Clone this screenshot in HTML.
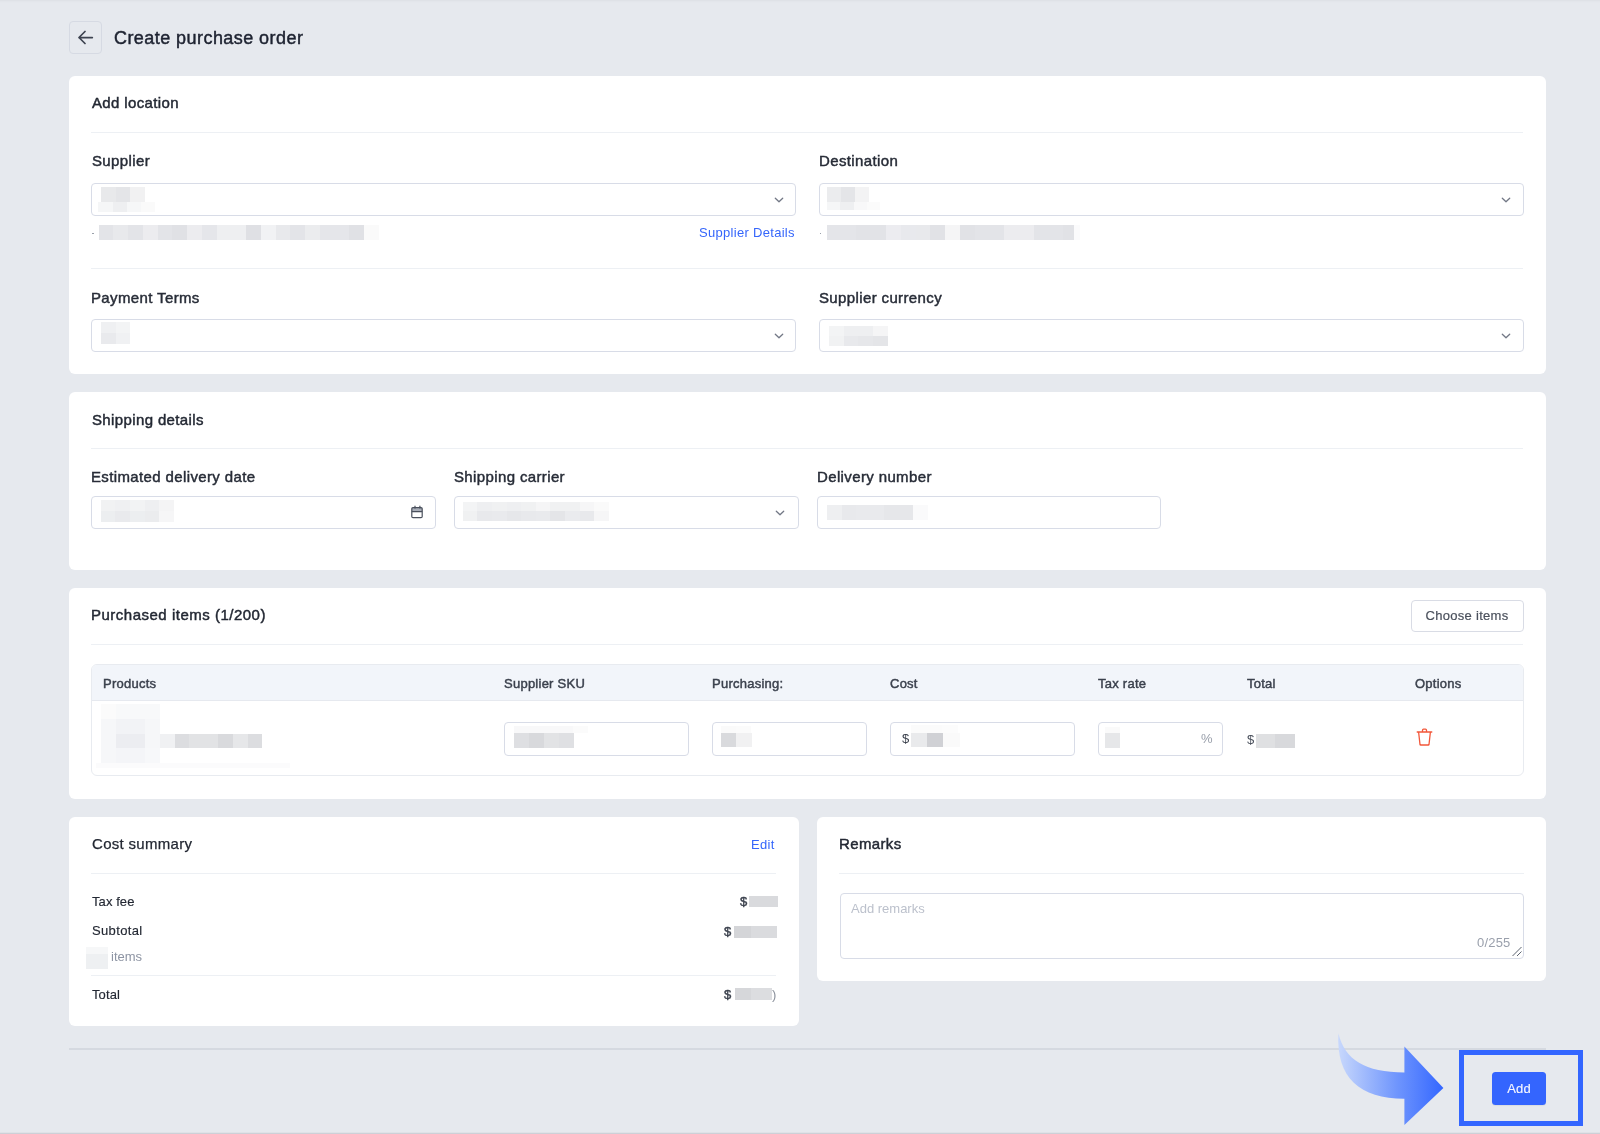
<!DOCTYPE html><html><head><meta charset="utf-8"><style>
html,body{margin:0;padding:0;width:1600px;height:1134px;overflow:hidden;background:#e6e9ee;}
body{position:relative;font-family:"Liberation Sans",sans-serif;}
.t{position:absolute;white-space:nowrap;line-height:1;will-change:transform;}
.m{-webkit-text-stroke:0.45px currentColor;letter-spacing:0.25px;}
.l{letter-spacing:0.37px;}
.r{position:absolute;box-sizing:border-box;}
</style></head><body>
<div class="r" style="left:0px;top:0px;width:1600px;height:1px;background:#dfe2e7"></div>
<div class="r" style="left:0px;top:1px;width:1600px;height:1px;background:#e3e6eb"></div>
<div class="r" style="left:0px;top:2px;width:1600px;height:1px;background:#e5e8ed"></div>
<div class="r" style="left:0px;top:1132px;width:1600px;height:1px;background:#dfe2e7"></div>
<div class="r" style="left:0px;top:1133px;width:1600px;height:1px;background:#cdd0d7"></div>
<div class="r" style="left:69px;top:21px;width:33px;height:33px;background:transparent;border:1px solid #d6dae3;border-radius:4px;"></div>
<svg class="r" style="left:77px;top:29px" width="18" height="17" viewBox="0 0 18 17"><path d="M15.3 8.5 H2 M8 2.5 L2 8.5 L8 14.5" fill="none" stroke="#3d4350" stroke-width="1.75" stroke-linecap="round" stroke-linejoin="round"/></svg>
<div class="t m" style="left:113.50px;top:29.06px;font-size:18px;color:#1d2230;letter-spacing:0.44px;">Create purchase order</div>
<div class="r" style="left:69px;top:76px;width:1477px;height:298px;background:#ffffff;border-radius:6px;"></div>
<div class="t m" style="left:91.50px;top:95.30px;font-size:15px;color:#232833;letter-spacing:0.37px;">Add location</div>
<div class="r" style="left:91px;top:132px;width:1432px;height:1px;background:#edf0f4"></div>
<div class="t m" style="left:91.50px;top:153.30px;font-size:15px;color:#272c37;letter-spacing:0.37px;">Supplier</div>
<div class="t m" style="left:819.30px;top:153.30px;font-size:15px;color:#272c37;letter-spacing:0.37px;">Destination</div>
<div class="r" style="left:91px;top:183px;width:705px;height:33px;background:#fff;border:1px solid #d8dce7;border-radius:4px;"></div>
<div class="r" style="left:819px;top:183px;width:705px;height:33px;background:#fff;border:1px solid #d8dce7;border-radius:4px;"></div>
<svg class="r" style="left:774px;top:196px" width="10" height="8" viewBox="0 0 10 8"><path d="M1.3 2.3 L5 5.8 L8.7 2.3" fill="none" stroke="#737886" stroke-width="1.3" stroke-linecap="round" stroke-linejoin="round"/></svg>
<svg class="r" style="left:1501.2px;top:196px" width="10" height="8" viewBox="0 0 10 8"><path d="M1.3 2.3 L5 5.8 L8.7 2.3" fill="none" stroke="#737886" stroke-width="1.3" stroke-linecap="round" stroke-linejoin="round"/></svg>
<div class="r" style="left:101.00px;top:187.00px;width:14.90px;height:14.80px;background:#e8e9eb"></div>
<div class="r" style="left:115.60px;top:187.00px;width:14.90px;height:14.80px;background:#e4e5e8"></div>
<div class="r" style="left:130.20px;top:187.00px;width:14.90px;height:14.80px;background:#f1f1f2"></div>
<div class="r" style="left:98.40px;top:201.60px;width:14.40px;height:10.30px;background:#f5f6f7"></div>
<div class="r" style="left:112.50px;top:201.60px;width:14.40px;height:10.30px;background:#eeeff1"></div>
<div class="r" style="left:126.60px;top:201.60px;width:14.40px;height:10.30px;background:#f6f7f8"></div>
<div class="r" style="left:140.70px;top:201.60px;width:14.40px;height:10.30px;background:#fafafa"></div>
<div class="r" style="left:827.30px;top:187.00px;width:14.10px;height:14.90px;background:#ebecee"></div>
<div class="r" style="left:841.10px;top:187.00px;width:14.10px;height:14.90px;background:#e4e5e8"></div>
<div class="r" style="left:854.90px;top:187.00px;width:14.10px;height:14.90px;background:#f3f3f4"></div>
<div class="r" style="left:827.30px;top:201.60px;width:13.40px;height:8.80px;background:#f5f6f7"></div>
<div class="r" style="left:840.40px;top:201.60px;width:13.40px;height:8.80px;background:#eeeff1"></div>
<div class="r" style="left:853.50px;top:201.60px;width:13.40px;height:8.80px;background:#f8f8f9"></div>
<div class="r" style="left:866.60px;top:201.60px;width:13.40px;height:8.80px;background:#fbfbfb"></div>
<div class="r" style="left:92px;top:232.5px;width:1.5px;height:1.5px;background:#9aa0aa"></div>
<div class="r" style="left:98.50px;top:225.30px;width:15.05px;height:14.80px;background:#e3e4e8"></div>
<div class="r" style="left:113.25px;top:225.30px;width:15.05px;height:14.80px;background:#e8e9ec"></div>
<div class="r" style="left:128.00px;top:225.30px;width:15.05px;height:14.80px;background:#e3e4e8"></div>
<div class="r" style="left:142.75px;top:225.30px;width:15.05px;height:14.80px;background:#ececef"></div>
<div class="r" style="left:157.50px;top:225.30px;width:15.05px;height:14.80px;background:#e3e4e8"></div>
<div class="r" style="left:172.25px;top:225.30px;width:15.05px;height:14.80px;background:#e0e1e5"></div>
<div class="r" style="left:187.00px;top:225.30px;width:15.05px;height:14.80px;background:#ececef"></div>
<div class="r" style="left:201.75px;top:225.30px;width:15.05px;height:14.80px;background:#e5e6ea"></div>
<div class="r" style="left:216.50px;top:225.30px;width:15.05px;height:14.80px;background:#eeeff1"></div>
<div class="r" style="left:231.25px;top:225.30px;width:15.05px;height:14.80px;background:#eeeff1"></div>
<div class="r" style="left:246.00px;top:225.30px;width:15.05px;height:14.80px;background:#dfe0e4"></div>
<div class="r" style="left:260.75px;top:225.30px;width:15.05px;height:14.80px;background:#f1f2f4"></div>
<div class="r" style="left:275.50px;top:225.30px;width:15.05px;height:14.80px;background:#e8e9ec"></div>
<div class="r" style="left:290.25px;top:225.30px;width:15.05px;height:14.80px;background:#e3e4e8"></div>
<div class="r" style="left:305.00px;top:225.30px;width:15.05px;height:14.80px;background:#ebecee"></div>
<div class="r" style="left:319.75px;top:225.30px;width:15.05px;height:14.80px;background:#e5e6ea"></div>
<div class="r" style="left:334.50px;top:225.30px;width:15.05px;height:14.80px;background:#e5e6ea"></div>
<div class="r" style="left:349.25px;top:225.30px;width:15.05px;height:14.80px;background:#e0e1e5"></div>
<div class="r" style="left:364.00px;top:225.30px;width:15.05px;height:14.80px;background:#fafafa"></div>
<div class="t " style="right:805.00px;top:226.30px;font-size:13px;color:#3566fb;letter-spacing:0.3px;">Supplier Details</div>
<div class="r" style="left:819.5px;top:232.5px;width:1.5px;height:1.5px;background:#9aa0aa"></div>
<div class="r" style="left:826.90px;top:225.30px;width:15.07px;height:14.80px;background:#e4e5e9"></div>
<div class="r" style="left:841.67px;top:225.30px;width:15.07px;height:14.80px;background:#e4e5e9"></div>
<div class="r" style="left:856.44px;top:225.30px;width:15.07px;height:14.80px;background:#e2e3e7"></div>
<div class="r" style="left:871.21px;top:225.30px;width:15.07px;height:14.80px;background:#e2e3e7"></div>
<div class="r" style="left:885.98px;top:225.30px;width:15.07px;height:14.80px;background:#ececf0"></div>
<div class="r" style="left:900.75px;top:225.30px;width:15.07px;height:14.80px;background:#e8e9ed"></div>
<div class="r" style="left:915.52px;top:225.30px;width:15.07px;height:14.80px;background:#e8e9ec"></div>
<div class="r" style="left:930.29px;top:225.30px;width:15.07px;height:14.80px;background:#e1e2e6"></div>
<div class="r" style="left:945.06px;top:225.30px;width:15.07px;height:14.80px;background:#f5f5f6"></div>
<div class="r" style="left:959.83px;top:225.30px;width:15.07px;height:14.80px;background:#e1e2e6"></div>
<div class="r" style="left:974.60px;top:225.30px;width:15.07px;height:14.80px;background:#e3e4e8"></div>
<div class="r" style="left:989.37px;top:225.30px;width:15.07px;height:14.80px;background:#e3e4e8"></div>
<div class="r" style="left:1004.14px;top:225.30px;width:15.07px;height:14.80px;background:#ececef"></div>
<div class="r" style="left:1018.91px;top:225.30px;width:15.07px;height:14.80px;background:#ececef"></div>
<div class="r" style="left:1033.68px;top:225.30px;width:15.07px;height:14.80px;background:#e3e4e8"></div>
<div class="r" style="left:1048.45px;top:225.30px;width:15.07px;height:14.80px;background:#e3e4e8"></div>
<div class="r" style="left:1063.22px;top:225.30px;width:15.07px;height:14.80px;background:#e1e2e6"></div>
<div class="r" style="left:1073.5px;top:225.3px;width:6px;height:14.5px;background:#fbfbfc"></div>
<div class="r" style="left:91px;top:268px;width:1432px;height:1px;background:#edf0f4"></div>
<div class="t m" style="left:90.50px;top:289.60px;font-size:15px;color:#272c37;letter-spacing:0.37px;">Payment Terms</div>
<div class="t m" style="left:819.30px;top:289.60px;font-size:15px;color:#272c37;letter-spacing:0.37px;">Supplier currency</div>
<div class="r" style="left:91px;top:319px;width:705px;height:33px;background:#fff;border:1px solid #d8dce7;border-radius:4px;"></div>
<div class="r" style="left:819px;top:319px;width:705px;height:33px;background:#fff;border:1px solid #d8dce7;border-radius:4px;"></div>
<svg class="r" style="left:774.2px;top:331.8px" width="10" height="8" viewBox="0 0 10 8"><path d="M1.3 2.3 L5 5.8 L8.7 2.3" fill="none" stroke="#737886" stroke-width="1.3" stroke-linecap="round" stroke-linejoin="round"/></svg>
<svg class="r" style="left:1501.2px;top:331.8px" width="10" height="8" viewBox="0 0 10 8"><path d="M1.3 2.3 L5 5.8 L8.7 2.3" fill="none" stroke="#737886" stroke-width="1.3" stroke-linecap="round" stroke-linejoin="round"/></svg>
<div class="r" style="left:101.00px;top:322.00px;width:14.90px;height:11.30px;background:#eff0f2"></div>
<div class="r" style="left:115.60px;top:322.00px;width:14.90px;height:11.30px;background:#f3f4f5"></div>
<div class="r" style="left:101.00px;top:333.00px;width:14.90px;height:11.30px;background:#e9eaed"></div>
<div class="r" style="left:115.60px;top:333.00px;width:14.90px;height:11.30px;background:#f0f1f3"></div>
<div class="r" style="left:829.00px;top:326.00px;width:14.90px;height:10.30px;background:#f3f4f5"></div>
<div class="r" style="left:843.60px;top:326.00px;width:14.90px;height:10.30px;background:#eeeff1"></div>
<div class="r" style="left:858.20px;top:326.00px;width:14.90px;height:10.30px;background:#eeeff1"></div>
<div class="r" style="left:872.80px;top:326.00px;width:14.90px;height:10.30px;background:#f5f5f6"></div>
<div class="r" style="left:829.00px;top:336.00px;width:14.90px;height:10.30px;background:#f1f2f3"></div>
<div class="r" style="left:843.60px;top:336.00px;width:14.90px;height:10.30px;background:#e8e9ec"></div>
<div class="r" style="left:858.20px;top:336.00px;width:14.90px;height:10.30px;background:#e6e7ea"></div>
<div class="r" style="left:872.80px;top:336.00px;width:14.90px;height:10.30px;background:#e4e5e8"></div>
<div class="r" style="left:69px;top:392px;width:1477px;height:178px;background:#ffffff;border-radius:6px;"></div>
<div class="t m" style="left:91.50px;top:411.50px;font-size:15px;color:#232833;letter-spacing:0.37px;">Shipping details</div>
<div class="r" style="left:91px;top:448px;width:1432px;height:1px;background:#edf0f4"></div>
<div class="t m" style="left:90.50px;top:468.50px;font-size:15px;color:#272c37;letter-spacing:0.37px;">Estimated delivery date</div>
<div class="t m" style="left:454.30px;top:468.50px;font-size:15px;color:#272c37;letter-spacing:0.37px;">Shipping carrier</div>
<div class="t m" style="left:816.70px;top:468.50px;font-size:15px;color:#272c37;letter-spacing:0.37px;">Delivery number</div>
<div class="r" style="left:91px;top:496px;width:345px;height:33px;background:#fff;border:1px solid #d8dce7;border-radius:4px;"></div>
<div class="r" style="left:454px;top:496px;width:345px;height:33px;background:#fff;border:1px solid #d8dce7;border-radius:4px;"></div>
<div class="r" style="left:817px;top:496px;width:344px;height:33px;background:#fff;border:1px solid #d8dce7;border-radius:4px;"></div>
<svg class="r" style="left:410px;top:505px" width="14" height="14" viewBox="0 0 14 14"><rect x="1.8" y="2.6" width="10.4" height="4" fill="#a9aeb8"/><rect x="1.8" y="2.6" width="10.4" height="10" rx="1.2" fill="none" stroke="#4a505c" stroke-width="1.2"/><path d="M1.8 6.6 H12.2 M5 0.8 V3.4 M9.9 0.8 V3.4" stroke="#4a505c" stroke-width="1.2" fill="none"/></svg>
<svg class="r" style="left:775px;top:509px" width="10" height="8" viewBox="0 0 10 8"><path d="M1.3 2.3 L5 5.8 L8.7 2.3" fill="none" stroke="#737886" stroke-width="1.3" stroke-linecap="round" stroke-linejoin="round"/></svg>
<div class="r" style="left:100.70px;top:499.60px;width:14.90px;height:11.30px;background:#f1f2f3"></div>
<div class="r" style="left:115.30px;top:499.60px;width:14.90px;height:11.30px;background:#eff0f2"></div>
<div class="r" style="left:129.90px;top:499.60px;width:14.90px;height:11.30px;background:#f2f3f4"></div>
<div class="r" style="left:144.50px;top:499.60px;width:14.90px;height:11.30px;background:#eeeff1"></div>
<div class="r" style="left:159.10px;top:499.60px;width:14.90px;height:11.30px;background:#f4f4f5"></div>
<div class="r" style="left:100.70px;top:510.60px;width:14.90px;height:11.30px;background:#eceef0"></div>
<div class="r" style="left:115.30px;top:510.60px;width:14.90px;height:11.30px;background:#e9eaed"></div>
<div class="r" style="left:129.90px;top:510.60px;width:14.90px;height:11.30px;background:#eceef0"></div>
<div class="r" style="left:144.50px;top:510.60px;width:14.90px;height:11.30px;background:#ebecee"></div>
<div class="r" style="left:159.10px;top:510.60px;width:14.90px;height:11.30px;background:#f6f6f7"></div>
<div class="r" style="left:462.80px;top:501.80px;width:14.90px;height:9.30px;background:#f3f4f5"></div>
<div class="r" style="left:477.40px;top:501.80px;width:14.90px;height:9.30px;background:#eeeff1"></div>
<div class="r" style="left:492.00px;top:501.80px;width:14.90px;height:9.30px;background:#f0f1f2"></div>
<div class="r" style="left:506.60px;top:501.80px;width:14.90px;height:9.30px;background:#eeeff1"></div>
<div class="r" style="left:521.20px;top:501.80px;width:14.90px;height:9.30px;background:#f0f1f2"></div>
<div class="r" style="left:535.80px;top:501.80px;width:14.90px;height:9.30px;background:#f5f5f6"></div>
<div class="r" style="left:550.40px;top:501.80px;width:14.90px;height:9.30px;background:#f0f1f2"></div>
<div class="r" style="left:565.00px;top:501.80px;width:14.90px;height:9.30px;background:#f0f1f2"></div>
<div class="r" style="left:579.60px;top:501.80px;width:14.90px;height:9.30px;background:#f6f6f7"></div>
<div class="r" style="left:594.20px;top:501.80px;width:14.90px;height:9.30px;background:#fafafa"></div>
<div class="r" style="left:462.80px;top:510.80px;width:14.90px;height:9.80px;background:#f0f1f2"></div>
<div class="r" style="left:477.40px;top:510.80px;width:14.90px;height:9.80px;background:#e8e9ec"></div>
<div class="r" style="left:492.00px;top:510.80px;width:14.90px;height:9.80px;background:#e9eaed"></div>
<div class="r" style="left:506.60px;top:510.80px;width:14.90px;height:9.80px;background:#e6e7ea"></div>
<div class="r" style="left:521.20px;top:510.80px;width:14.90px;height:9.80px;background:#e8e9ec"></div>
<div class="r" style="left:535.80px;top:510.80px;width:14.90px;height:9.80px;background:#e9eaed"></div>
<div class="r" style="left:550.40px;top:510.80px;width:14.90px;height:9.80px;background:#e4e5e8"></div>
<div class="r" style="left:565.00px;top:510.80px;width:14.90px;height:9.80px;background:#eaebee"></div>
<div class="r" style="left:579.60px;top:510.80px;width:14.90px;height:9.80px;background:#e8e9ec"></div>
<div class="r" style="left:594.20px;top:510.80px;width:14.90px;height:9.80px;background:#f6f6f7"></div>
<div class="r" style="left:827.20px;top:505.00px;width:14.60px;height:14.70px;background:#eeeff1"></div>
<div class="r" style="left:841.50px;top:505.00px;width:14.60px;height:14.70px;background:#e8e9ec"></div>
<div class="r" style="left:855.80px;top:505.00px;width:14.60px;height:14.70px;background:#e9eaed"></div>
<div class="r" style="left:870.10px;top:505.00px;width:14.60px;height:14.70px;background:#e9eaed"></div>
<div class="r" style="left:884.40px;top:505.00px;width:14.60px;height:14.70px;background:#e6e7ea"></div>
<div class="r" style="left:898.70px;top:505.00px;width:14.60px;height:14.70px;background:#e6e7ea"></div>
<div class="r" style="left:913.00px;top:505.00px;width:14.60px;height:14.70px;background:#fafafb"></div>
<div class="r" style="left:69px;top:588px;width:1477px;height:211px;background:#ffffff;border-radius:6px;"></div>
<div class="t m" style="left:90.50px;top:606.80px;font-size:15px;color:#232833;letter-spacing:0.5px;">Purchased items (1/200)</div>
<div class="r" style="left:1411px;top:600px;width:113px;height:32px;background:#fff;border:1px solid #d9dce5;border-radius:4px;"></div>
<div class="t " style="left:1267.30px;width:400px;text-align:center;top:609.10px;font-size:13px;color:#4a505c;letter-spacing:0.3px;-webkit-text-stroke:0.2px #4a505c;">Choose items</div>
<div class="r" style="left:91px;top:644px;width:1432px;height:1px;background:#edf0f4"></div>
<div class="r" style="left:91px;top:663.5px;width:1432.5px;height:112px;background:#fff;border:1px solid #e8ebf0;border-radius:6px;"></div>
<div class="r" style="left:92px;top:664.5px;width:1430.5px;height:36px;background:#f2f5fa;border-radius:5px 5px 0 0;border-bottom:1px solid #e6e9ef"></div>
<div class="t m" style="left:102.80px;top:677.20px;font-size:13px;color:#3b414d;">Products</div>
<div class="t m" style="left:504.00px;top:677.20px;font-size:13px;color:#3b414d;">Supplier SKU</div>
<div class="t m" style="left:712.00px;top:677.20px;font-size:13px;color:#3b414d;">Purchasing:</div>
<div class="t m" style="left:890.00px;top:677.20px;font-size:13px;color:#3b414d;">Cost</div>
<div class="t m" style="left:1098.00px;top:677.20px;font-size:13px;color:#3b414d;">Tax rate</div>
<div class="t m" style="left:1246.50px;top:677.20px;font-size:13px;color:#3b414d;">Total</div>
<div class="t m" style="left:1415.00px;top:677.20px;font-size:13px;color:#3b414d;">Options</div>
<div class="r" style="left:101.00px;top:704.00px;width:14.90px;height:15.30px;background:#fbfbfb"></div>
<div class="r" style="left:115.60px;top:704.00px;width:14.90px;height:15.30px;background:#f8f9fa"></div>
<div class="r" style="left:130.20px;top:704.00px;width:14.90px;height:15.30px;background:#f8f9fa"></div>
<div class="r" style="left:144.80px;top:704.00px;width:14.90px;height:15.30px;background:#f8f9fa"></div>
<div class="r" style="left:101.00px;top:719.00px;width:14.90px;height:14.80px;background:#f6f7f9"></div>
<div class="r" style="left:115.60px;top:719.00px;width:14.90px;height:14.80px;background:#f2f3f6"></div>
<div class="r" style="left:130.20px;top:719.00px;width:14.90px;height:14.80px;background:#f2f3f6"></div>
<div class="r" style="left:144.80px;top:719.00px;width:14.90px;height:14.80px;background:#f6f7f9"></div>
<div class="r" style="left:101.00px;top:733.50px;width:14.90px;height:14.80px;background:#f6f7f9"></div>
<div class="r" style="left:115.60px;top:733.50px;width:14.90px;height:14.80px;background:#ecedf1"></div>
<div class="r" style="left:130.20px;top:733.50px;width:14.90px;height:14.80px;background:#ecedf1"></div>
<div class="r" style="left:144.80px;top:733.50px;width:14.90px;height:14.80px;background:#f6f7f9"></div>
<div class="r" style="left:101.00px;top:748.00px;width:14.90px;height:14.80px;background:#f6f7f9"></div>
<div class="r" style="left:115.60px;top:748.00px;width:14.90px;height:14.80px;background:#f4f5f8"></div>
<div class="r" style="left:130.20px;top:748.00px;width:14.90px;height:14.80px;background:#f4f5f8"></div>
<div class="r" style="left:144.80px;top:748.00px;width:14.90px;height:14.80px;background:#f7f8fa"></div>
<div class="r" style="left:160.00px;top:733.50px;width:14.90px;height:14.80px;background:#f0f1f3"></div>
<div class="r" style="left:174.60px;top:733.50px;width:14.90px;height:14.80px;background:#dcdde0"></div>
<div class="r" style="left:189.20px;top:733.50px;width:14.90px;height:14.80px;background:#e2e3e5"></div>
<div class="r" style="left:203.80px;top:733.50px;width:14.90px;height:14.80px;background:#e2e3e5"></div>
<div class="r" style="left:218.40px;top:733.50px;width:14.90px;height:14.80px;background:#d9dadd"></div>
<div class="r" style="left:233.00px;top:733.50px;width:14.90px;height:14.80px;background:#e6e7e9"></div>
<div class="r" style="left:247.60px;top:733.50px;width:14.90px;height:14.80px;background:#dcdde0"></div>
<div class="r" style="left:96px;top:762.5px;width:193.5px;height:5.5px;background:#fbfbfc"></div>
<div class="r" style="left:504px;top:722px;width:185px;height:34px;background:#fff;border:1px solid #d8dce7;border-radius:4px;"></div>
<div class="r" style="left:712px;top:722px;width:155px;height:34px;background:#fff;border:1px solid #d8dce7;border-radius:4px;"></div>
<div class="r" style="left:890px;top:722px;width:185px;height:34px;background:#fff;border:1px solid #d8dce7;border-radius:4px;"></div>
<div class="r" style="left:1098px;top:722px;width:125px;height:34px;background:#fff;border:1px solid #d8dce7;border-radius:4px;"></div>
<div class="r" style="left:514.40px;top:725.50px;width:15.00px;height:7.80px;background:#f8f8f9"></div>
<div class="r" style="left:529.10px;top:725.50px;width:15.00px;height:7.80px;background:#f8f8f9"></div>
<div class="r" style="left:543.80px;top:725.50px;width:15.00px;height:7.80px;background:#f8f8f9"></div>
<div class="r" style="left:558.50px;top:725.50px;width:15.00px;height:7.80px;background:#f8f8f9"></div>
<div class="r" style="left:573.20px;top:725.50px;width:15.00px;height:7.80px;background:#fbfbfb"></div>
<div class="r" style="left:514.40px;top:733.00px;width:15.00px;height:15.00px;background:#dedfe2"></div>
<div class="r" style="left:529.10px;top:733.00px;width:15.00px;height:15.00px;background:#d8d9dc"></div>
<div class="r" style="left:543.80px;top:733.00px;width:15.00px;height:15.00px;background:#e2e3e5"></div>
<div class="r" style="left:558.50px;top:733.00px;width:15.00px;height:15.00px;background:#dfe0e3"></div>
<div class="r" style="left:721.00px;top:725.50px;width:15.00px;height:7.80px;background:#fafafa"></div>
<div class="r" style="left:735.70px;top:725.50px;width:15.00px;height:7.80px;background:#fbfbfb"></div>
<div class="r" style="left:720.70px;top:733.00px;width:16.00px;height:13.80px;background:#d9dadd"></div>
<div class="r" style="left:736.40px;top:733.00px;width:16.00px;height:13.80px;background:#f1f1f2"></div>
<div class="t " style="left:901.80px;top:732.30px;font-size:13px;color:#3b414d;">$</div>
<div class="r" style="left:911.00px;top:725.00px;width:15.80px;height:8.30px;background:#fbfbfb"></div>
<div class="r" style="left:926.50px;top:725.00px;width:15.80px;height:8.30px;background:#fbfbfb"></div>
<div class="r" style="left:942.00px;top:725.00px;width:15.80px;height:8.30px;background:#fcfcfc"></div>
<div class="r" style="left:911.00px;top:733.30px;width:16.50px;height:13.80px;background:#e9eaec"></div>
<div class="r" style="left:927.20px;top:733.30px;width:16.50px;height:13.80px;background:#d0d1d5"></div>
<div class="r" style="left:943.40px;top:733.30px;width:16.50px;height:13.80px;background:#fafafa"></div>
<div class="r" style="left:1105.00px;top:726.50px;width:15.30px;height:6.80px;background:#fafafa"></div>
<div class="r" style="left:1105.00px;top:733.00px;width:15.30px;height:15.00px;background:#e6e7e9"></div>
<div class="t " style="left:1200.50px;top:732.10px;font-size:13px;color:#9aa0ab;">%</div>
<div class="t " style="left:1246.50px;top:732.80px;font-size:13px;color:#4a505c;">$</div>
<div class="r" style="left:1255.50px;top:733.50px;width:20.00px;height:14.80px;background:#dfe0e2"></div>
<div class="r" style="left:1275.20px;top:733.50px;width:20.00px;height:14.80px;background:#d8d9dc"></div>
<svg class="r" style="left:1415px;top:727px" width="19" height="20" viewBox="0 0 19 20"><path d="M2.2 5 H16.8 M7.5 4.8 V3.2 Q7.5 2.2 8.5 2.2 H10.5 Q11.5 2.2 11.5 3.2 V4.8 M3.6 5 L5 17.5 Q5.1 18 5.7 18 H13.3 Q13.9 18 14 17.5 L15.4 5" fill="none" stroke="#f2573a" stroke-width="1.3" stroke-linejoin="round" stroke-linecap="round"/></svg>
<div class="r" style="left:69px;top:817px;width:730px;height:209px;background:#ffffff;border-radius:6px;"></div>
<div class="t " style="left:91.50px;top:836.00px;font-size:15px;color:#232833;letter-spacing:0.3px;-webkit-text-stroke:0.25px #232833;">Cost summary</div>
<div class="t " style="right:825.70px;top:838.30px;font-size:13px;color:#3566fb;letter-spacing:0.3px;">Edit</div>
<div class="r" style="left:91px;top:873px;width:685px;height:1px;background:#edf0f4"></div>
<div class="t " style="left:91.50px;top:894.80px;font-size:13px;color:#232833;letter-spacing:0.08px;-webkit-text-stroke:0.15px #232833;">Tax fee</div>
<div class="t " style="left:91.50px;top:924.00px;font-size:13px;color:#232833;letter-spacing:0.35px;-webkit-text-stroke:0.15px #232833;">Subtotal</div>
<div class="r" style="left:86.30px;top:946.50px;width:21.90px;height:7.30px;background:#f6f7f8"></div>
<div class="r" style="left:86.30px;top:953.50px;width:21.90px;height:15.10px;background:#eef0f2"></div>
<div class="t " style="left:110.70px;top:949.80px;font-size:13px;color:#8d94a3;">items</div>
<div class="r" style="left:91px;top:975px;width:685px;height:1px;background:#edf0f4"></div>
<div class="t " style="left:91.50px;top:988.20px;font-size:13px;color:#232833;letter-spacing:0.1px;-webkit-text-stroke:0.15px #232833;">Total</div>
<div class="t m" style="left:740.40px;top:894.80px;font-size:13px;color:#3b414d;">$</div>
<div class="r" style="left:748.90px;top:895.90px;width:29.30px;height:11.10px;background:#d9dadd"></div>
<div class="t m" style="left:723.90px;top:924.80px;font-size:13px;color:#3b414d;">$</div>
<div class="r" style="left:733.50px;top:925.60px;width:17.80px;height:12.30px;background:#d4d5d8"></div>
<div class="r" style="left:751.00px;top:925.60px;width:25.80px;height:12.30px;background:#dadbde"></div>
<div class="t m" style="left:723.90px;top:988.30px;font-size:13px;color:#3b414d;">$</div>
<div class="r" style="left:734.80px;top:988.00px;width:16.30px;height:11.60px;background:#d6d7da"></div>
<div class="r" style="left:750.80px;top:988.00px;width:21.00px;height:11.60px;background:#dcdde0"></div>
<div class="t " style="left:771.50px;top:988.30px;font-size:13px;color:#8a909b;">)</div>
<div class="r" style="left:817px;top:817px;width:729px;height:164px;background:#ffffff;border-radius:6px;"></div>
<div class="t m" style="left:839.40px;top:836.20px;font-size:15px;color:#232833;letter-spacing:0.37px;">Remarks</div>
<div class="r" style="left:839px;top:873px;width:685px;height:1px;background:#edf0f4"></div>
<div class="r" style="left:839.5px;top:892.5px;width:684px;height:66px;background:#fff;border:1px solid #d8dce7;border-radius:4px;"></div>
<div class="t " style="left:851.00px;top:902.20px;font-size:13px;color:#bcc1cc;">Add remarks</div>
<div class="t " style="right:89.00px;top:935.50px;font-size:13px;color:#9aa0ac;letter-spacing:0.2px;">0/255</div>
<svg class="r" style="left:1511px;top:946px" width="12" height="11" viewBox="0 0 12 11"><path d="M1.5 10 L10.5 1 M6 10 L10.5 5.5" stroke="#5d6470" stroke-width="1" fill="none"/></svg>
<div class="r" style="left:69px;top:1048px;width:1477px;height:1.5px;background:#d5d9e0"></div>
<div class="r" style="left:1459px;top:1050px;width:124px;height:76px;border:5px solid #3366ff"></div>
<div class="r" style="left:1492px;top:1072px;width:54px;height:33px;background:#3465fe;border-radius:3.5px;box-shadow:0 1px 1px rgba(0,0,0,0.06);"></div>
<div class="t " style="left:1319.00px;width:400px;text-align:center;top:1081.60px;font-size:13px;color:#f4f6ff;letter-spacing:0.2px;-webkit-text-stroke:0.15px #f4f6ff;">Add</div>
<svg class="r" style="left:1330px;top:1030px" width="120" height="100" viewBox="1330 1030 120 100">
<defs><linearGradient id="ag" x1="1338" y1="0" x2="1444" y2="0" gradientUnits="userSpaceOnUse">
<stop offset="0" stop-color="#c8d8fc"/><stop offset="0.55" stop-color="#7096fd"/><stop offset="1" stop-color="#3366ff"/></linearGradient></defs>
<path d="M1338.4 1033.6 C1345 1060 1365 1072.5 1404.4 1072.5 L1404.4 1046.6 L1443.4 1087.9 L1404.4 1125 L1404.4 1098.8 C1360 1098.8 1336 1078 1338.4 1033.6 Z" fill="url(#ag)"/>
</svg>
</body></html>
